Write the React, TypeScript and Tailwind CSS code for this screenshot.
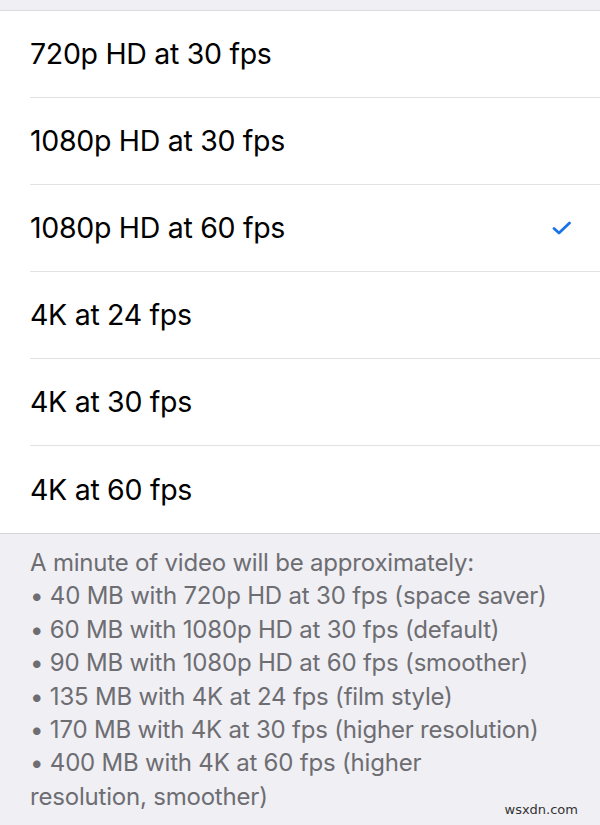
import React from "react";

const rows = [
  "720p HD at 30 fps",
  "1080p HD at 30 fps",
  "1080p HD at 60 fps",
  "4K at 24 fps",
  "4K at 30 fps",
  "4K at 60 fps",
];

const notes = [
  "A minute of video will be approximately:",
  "• 40 MB with 720p HD at 30 fps (space saver)",
  "• 60 MB with 1080p HD at 30 fps (default)",
  "• 90 MB with 1080p HD at 60 fps (smoother)",
  "• 135 MB with 4K at 24 fps (film style)",
  "• 170 MB with 4K at 30 fps (higher resolution)",
  "• 400 MB with 4K at 60 fps (higher",
  "resolution, smoother)",
];

export default function App() {
  return (
    <div
      className="w-[600px] h-[825px] overflow-hidden bg-[#efeff4] relative"
      style={{ fontFamily: "Inter, 'Noto Sans', sans-serif" }}
    >
      <div className="h-[11px] border-b border-[#dcdce0]" />
      <div className="bg-white">
        {rows.map((r, i) => (
          <div key={r} className="pl-[30px]">
            <div
              className={`h-[87px] flex items-center pr-[28px] ${
                i < rows.length - 1 ? "border-b border-[#e2e2e4]" : ""
              }`}
            >
              <span className="flex-1 text-[28.5px] text-black tracking-[-0.3px] pt-[1px]">{r}</span>
              {i === 2 && (
                <svg width="20" height="16" viewBox="0 0 20 16">
                  <path
                    d="M2 8.5 L7 13 L17.5 3"
                    fill="none"
                    stroke="#1a73e8"
                    strokeWidth="2.8"
                    strokeLinecap="round"
                    strokeLinejoin="round"
                  />
                </svg>
              )}
            </div>
          </div>
        ))}
      </div>
      <div className="border-t border-[#d6d6da] pt-[12px] pl-[30px] pr-[20px] text-[24px] leading-[33.4px] text-[#6d6d72] tracking-[-0.2px]">
        {notes.map((n) => (
          <div key={n} className="whitespace-nowrap">{n}</div>
        ))}
      </div>
      <div
        className="absolute right-[22px] bottom-[6px] text-[13px] text-[#333]"
        style={{ fontFamily: "'DejaVu Sans', sans-serif" }}
      >
        wsxdn.com
      </div>
    </div>
  );
}
